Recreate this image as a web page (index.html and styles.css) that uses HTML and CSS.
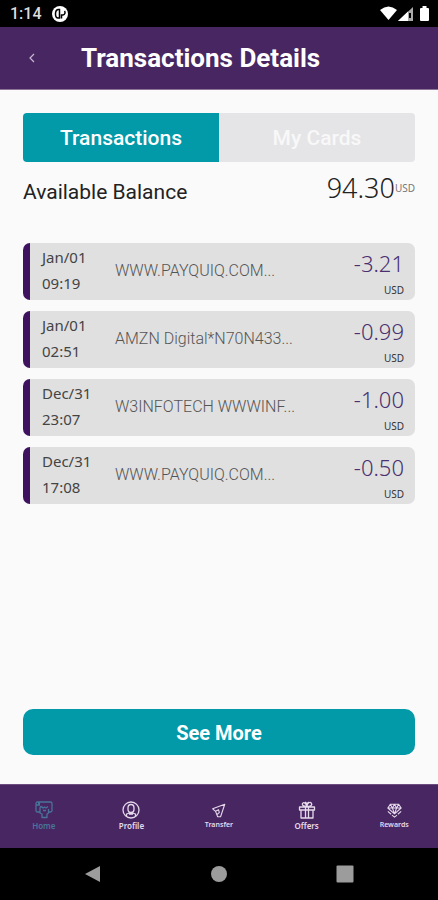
FILE: index.html
```html
<!DOCTYPE html>
<html lang="en">
<head>
<meta charset="utf-8">
<meta name="viewport" content="width=device-width, initial-scale=1">
<title>Transactions Details</title>
<link rel="stylesheet" href="styles.css">
</head>
<body>
<div class="status">
  <time class="clock">1:14</time>
  <svg class="status-app" viewBox="0 0 16 16" aria-hidden="true"><circle cx="8" cy="8" r="8" fill="#fff"/><path d="M7.500 3.500H6Q3.500 4 3.500 8t2.500 4h1.500ZM9.500 12.500V9H11a2.500 2.500 0 0 0 1.500-4" fill="none" stroke="#000" stroke-width="1.500"/></svg>
  <svg class="status-signals" viewBox="0 0 50 16" aria-hidden="true">
    <path d="M0 4Q8.500-3 17 4L8.500 14Z" fill="#fff"/>
    <path d="M18 15L33 1V15Z" fill="#aaa"/><path d="M18 15L28 5.500V15Z" fill="#fff"/><path d="M30 7V12" stroke="#000" stroke-width="2"/>
    <path d="M40 3q0-1 1-1h1.500V0h4v2H48q1 0 1 1v11q0 1-1 1h-7q-1 0-1-1Z" fill="#fff"/>
  </svg>
</div>
<header class="header">
  <button class="back" type="button" aria-label="Back"><svg viewBox="0 0 6 10" aria-hidden="true"><path d="M5 1L1 5l4 4" fill="none" stroke="currentColor" stroke-width="1.200"/></svg></button>
  <h1 class="title">Transactions Details</h1>
</header>
<main class="content">
  <div class="tabs">
    <button class="tab tab-active" type="button">Transactions</button>
    <button class="tab" type="button">My Cards</button>
  </div>
  <div class="balance">
    <span class="balance-label">Available Balance</span>
    <span class="balance-value">94.30<span class="balance-unit">USD</span></span>
  </div>
  <ul class="list">
    <li class="card"><div class="when"><span>Jan/01</span><span>09:19</span></div><div class="desc">WWW.PAYQUIQ.COM...</div><div class="sum"><span class="amount">-3.21</span><span class="unit">USD</span></div></li>
    <li class="card"><div class="when"><span>Jan/01</span><span>02:51</span></div><div class="desc">AMZN Digital*N70N433...</div><div class="sum"><span class="amount">-0.99</span><span class="unit">USD</span></div></li>
    <li class="card"><div class="when"><span>Dec/31</span><span>23:07</span></div><div class="desc">W3INFOTECH WWWINF...</div><div class="sum"><span class="amount">-1.00</span><span class="unit">USD</span></div></li>
    <li class="card"><div class="when"><span>Dec/31</span><span>17:08</span></div><div class="desc">WWW.PAYQUIQ.COM...</div><div class="sum"><span class="amount">-0.50</span><span class="unit">USD</span></div></li>
  </ul>
  <button class="more" type="button">See More</button>
</main>
<nav class="nav" aria-label="Main">
  <a class="nav-item nav-active" href="#"><svg class="icon" viewBox="0 0 18 18" aria-hidden="true"><path d="M5 11H2.500Q1 11 1 9.500v-7Q1 1 2.500 1h13Q17 1 17 2.500v7q0 1.500-1.500 1.500H13M1 4h4M5 7q0-1.500 1.500-1.500L8 7l1.500-1L11 7l2-1.500M5 7v5l2 1v3.500h5V13l1.500-1V8M8 9.500h3M3 2.500h2"/></svg>Home</a>
  <a class="nav-item" href="#"><svg class="icon" viewBox="0 0 18 18" aria-hidden="true"><circle cx="9" cy="9" r="8"/><path d="M6 7a3 3.500 0 0 1 6 0v1.500a3 3 0 0 1-6 0ZM7.500 11v1L4.500 13v2.500M10.500 11v1l3 1v2.500M7 13h4"/></svg>Profile</a>
  <a class="nav-item nav-compact" href="#"><svg class="icon" viewBox="0 0 18 18" aria-hidden="true"><path d="M16.500 1.500L2 7l3.500 3L8 16.500h3.500L16.500 1.500ZM5.500 10L9 8l1 3.500-2.500 2"/></svg>Transfer</a>
  <a class="nav-item" href="#"><svg class="icon" viewBox="0 0 18 18" aria-hidden="true"><path d="M1.500 6h15v3h-15ZM3 9v8h12V9M7.500 6v11M10.500 6v11M9 5.500C5 5.500 4 4 4.500 2.500S8 1.500 9 5.500c0-4 3.500-5 4.500-3S12 5.500 9 5.500M7 1l2 1.500L11 1"/></svg>Offers</a>
  <a class="nav-item nav-compact" href="#"><svg class="icon" viewBox="0 0 18 18" aria-hidden="true"><path d="M4 1.500h10l3 4.500-8 7-8-7ZM1 6h16M4 1.500L6.500 6 9 1.500 11.500 6 14 1.500M6.500 6L9 13l2.500-7M1 10l4 3.500M17 10l-4 3.500M6 14.500l3 2.500 3-2.500"/></svg>Rewards</a>
</nav>
<div class="system">
  <button class="sys" type="button" aria-label="Back"><svg viewBox="0 0 18 18" aria-hidden="true"><path d="M1 9L16 1v16Z"/></svg></button>
  <button class="sys" type="button" aria-label="Home"><svg viewBox="0 0 18 18" aria-hidden="true"><circle cx="9" cy="9" r="8"/></svg></button>
  <button class="sys" type="button" aria-label="Recent apps"><svg viewBox="0 0 18 18" aria-hidden="true"><rect width="17" height="17" x=".5" y=".5" rx="1"/></svg></button>
</div>
</body>
</html>
```
FILE: styles.css
```css
* { box-sizing: border-box; }
body {
  margin: 0;
  min-height: 100vh;
  display: flex;
  flex-direction: column;
  background: #fafafa;
  color: #222;
  font-family: "Noto Sans", "Open Sans", sans-serif;
}
button { border: 0; padding: 0; background: none; font: inherit; color: inherit; }
svg { display: block; }
.status {
  height: 27px;
  padding: 0 8px 0 10px;
  display: flex;
  align-items: center;
  gap: 10px;
  background: #000;
}
.clock { color: #ddd; font: 500 16px/28px Roboto, sans-serif; }
.status-app { width: 16px; height: 16px; }
.status-signals { width: 50px; height: 16px; margin-left: auto; }
.header {
  height: 63px;
  padding: 0 24px;
  display: flex;
  align-items: center;
  background: #482661;
  color: #fff;
  border-bottom: 1px solid #8d7599;
}
.back { width: 16px; height: 32px; display: grid; place-items: center; color: #c9b8d4; }
.back svg { width: 6px; height: 10px; }
.title { margin: 0 0 0 41px; font: 700 26px/32px Roboto, sans-serif; }
.content {
  flex: 1;
  padding: 23px 23px 29px;
  display: flex;
  flex-direction: column;
}
.tabs { height: 49px; display: flex; border-radius: 4px; overflow: hidden; }
.tab { flex: 1; background: #e5e5e7; color: #f8f8f8; font: 500 21px/50px Roboto, sans-serif; }
.tab-active { background: #0299a9; color: #fff; }
.balance {
  height: 81px;
  padding-top: 10px;
  display: flex;
  justify-content: space-between;
  align-items: flex-start;
}
.balance-label { font: 400 21px/40px Roboto, sans-serif; }
.balance-value { display: flex; align-items: center; font-weight: 300; font-size: 27px; line-height: 32px; }
.balance-unit { font-size: 10px; font-weight: 400; color: #777; }
.list { margin: 0; padding: 0; list-style: none; display: grid; gap: 11px; }
.card {
  height: 57px;
  padding: 0 11px 0 12px;
  display: flex;
  border-left: 7px solid #3f125f;
  border-radius: 7px;
  background: #e0e0e0;
}
.when { width: 73px; display: flex; flex-direction: column; padding-top: 1px; font-size: 15px; line-height: 26px; color: #444; }
.desc { flex: 1; font: 300 16px/56px Roboto, sans-serif; color: #555; white-space: nowrap; }
.sum { display: flex; flex-direction: column; align-items: flex-end; }
.amount { font-size: 22px; line-height: 40px; color: #49306f; font-weight: 300; }
.unit { font-size: 10px; line-height: 14px; color: #333; }
.more {
  height: 46px;
  margin-top: auto;
  border-radius: 10px;
  background: #0299a9;
  color: #fff;
  font: 700 20px/48px Roboto, sans-serif;
}
.nav {
  height: 64px;
  display: grid;
  grid-template-columns: repeat(5, 1fr);
  background: #482661;
  border-top: 1px solid #6b4d80;
}
.nav-item {
  display: flex;
  flex-direction: column;
  align-items: center;
  justify-content: center;
  gap: 1px;
  color: #e5d9ec;
  font-size: 8px;
  font-weight: 600;
  line-height: 12px;
  text-decoration: none;
}
.nav-active { color: #48749b; }
.nav-compact { font-size: 7px; }
.icon { width: 18px; height: 18px; fill: none; stroke: currentColor; stroke-width: 1.300; stroke-linejoin: round; }
.nav-compact .icon { width: 15px; height: 15px; }
.system {
  height: 52px;
  padding: 0 30px;
  display: grid;
  grid-template-columns: repeat(3, 1fr);
  background: #000;
}
.sys { display: grid; place-items: center; }
.sys svg { width: 18px; height: 18px; fill: #9c9c9c; }
```
